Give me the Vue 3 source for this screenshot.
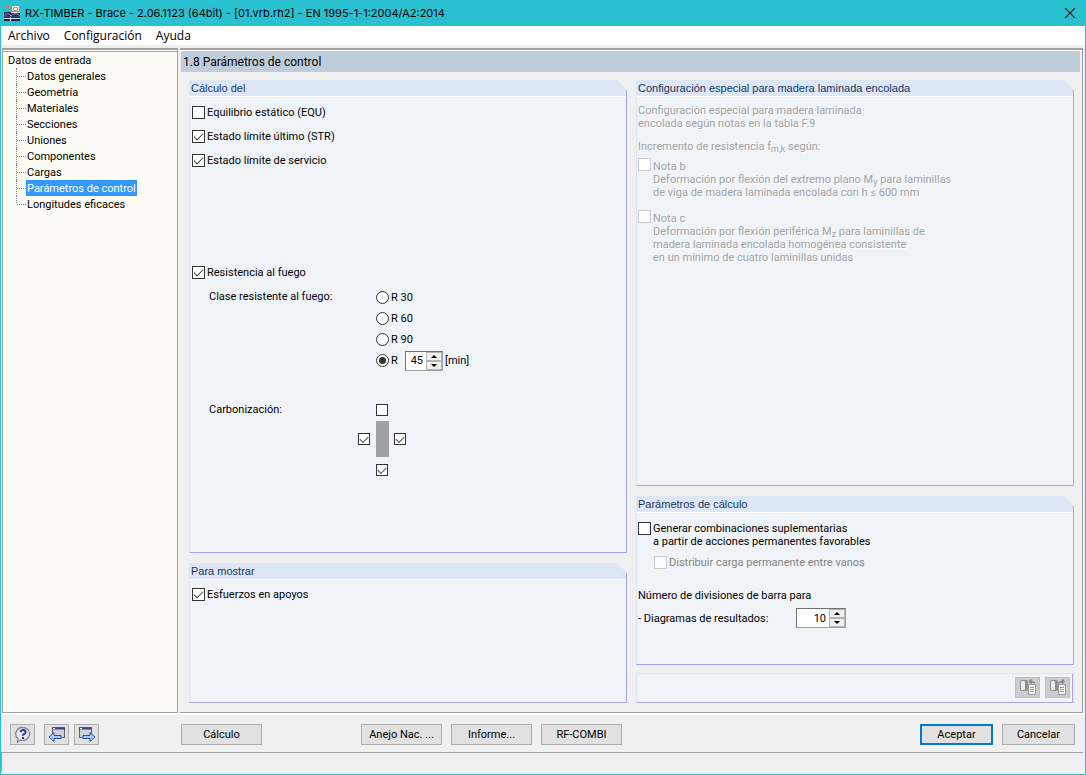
<script setup>
import { ref } from 'vue'

const menus = ['Archivo', 'Configuración', 'Ayuda']
const tree = ['Datos generales', 'Geometría', 'Materiales', 'Secciones', 'Uniones', 'Componentes', 'Cargas', 'Parámetros de control', 'Longitudes eficaces']
const current = ref('Parámetros de control')
const design = ref([
  { label: 'Equilibrio estático (EQU)', on: false },
  { label: 'Estado límite último (STR)', on: true },
  { label: 'Estado límite de servicio', on: true }
])
const fire = ref(true)
const fireClass = ref('R')
const minutes = ref(45)
const charring = ref({ top: false, left: true, right: true, bottom: true })
const charSides = { top: 'Arriba', left: 'Izquierda', right: 'Derecha', bottom: 'Abajo' }
const supports = ref(true)
const combos = ref(false)
const divisions = ref(10)
</script>

<template>
  <div class="window">
    <header class="titlebar">
      <svg class="app-icon" width="16" height="16" viewBox="0 0 16 16">
        <rect y="7" width="16" height="9" fill="#1f2658" />
        <rect x="7" y="0" width="9" height="8" fill="#f6e3d2" />
        <path d="M7.500 .5h8v6h-8z" stroke="#b9846a" fill="none" />
        <path d="M9.500 2.500h4v3h-4z" stroke="#c59478" fill="#fff" />
        <path d="M2 1.500h3M4.500 2v2H2.500M3 6.500h2" stroke="#b5835c" fill="none" />
        <path d="M0 13.500h16M6.500 10v6" stroke="#dfe3f0" fill="none" />
        <path d="M0 10.500l4-2 3 2 4-2 5 2" stroke="#8d97c4" fill="none" />
        <path d="M0 11.500h16" stroke="#3c4780" fill="none" />
      </svg>
      <h1>RX-TIMBER - Brace - 2.06.1123 (64bit) - [01.vrb.rh2] - EN 1995-1-1:2004/A2:2014</h1>
      <button class="close" type="button" aria-label="Cerrar">
        <svg width="10" height="10" viewBox="0 0 10 10"><path d="M0 0L10 10M10 0L0 10" stroke="#111" stroke-width="1.1" /></svg>
      </button>
    </header>

    <nav class="menubar">
      <button v-for="m in menus" :key="m" type="button">{{ m }}</button>
    </nav>

    <div class="workspace">
      <aside class="tree">
        <div class="root">Datos de entrada</div>
        <ul>
          <li v-for="t in tree" :key="t">
            <button type="button" :class="{ selected: t === current }" @click="current = t">{{ t }}</button>
          </li>
        </ul>
      </aside>

      <main class="main">
        <h2>1.8 Parámetros de control</h2>
        <div class="columns">
          <div class="column">
            <section class="group grow">
              <h3>Cálculo del</h3>
              <div class="body">
                <label v-for="d in design" :key="d.label" class="row"><input v-model="d.on" type="checkbox" />{{ d.label }}</label>
                <label class="row fire"><input v-model="fire" type="checkbox" />Resistencia al fuego</label>
                <div class="option">
                  <span class="caption">Clase resistente al fuego:</span>
                  <div class="radios">
                    <label v-for="r in ['R 30', 'R 60', 'R 90']" :key="r"><input v-model="fireClass" type="radio" name="fire" :value="r" />{{ r }}</label>
                    <div class="custom">
                      <label><input v-model="fireClass" type="radio" name="fire" value="R" />R</label>
                      <span class="spin small">
                        <input v-model="minutes" type="text" aria-label="Minutos" />
                        <span class="arrows">
                          <button type="button" aria-label="Más" @click="minutes++"><i class="up" /></button>
                          <button type="button" aria-label="Menos" @click="minutes--"><i class="down" /></button>
                        </span>
                      </span>
                      <span>[min]</span>
                    </div>
                  </div>
                </div>
                <div class="option charring">
                  <span class="caption">Carbonización:</span>
                  <div class="cross">
                    <input v-for="(name, side) in charSides" :key="side" v-model="charring[side]" type="checkbox" :class="side" :aria-label="name" />
                    <span class="beam" />
                  </div>
                </div>
              </div>
            </section>

            <section class="group show">
              <h3>Para mostrar</h3>
              <div class="body">
                <label class="row"><input v-model="supports" type="checkbox" />Esfuerzos en apoyos</label>
              </div>
            </section>
          </div>

          <div class="column">
            <section class="group grow">
              <h3>Configuración especial para madera laminada encolada</h3>
              <div class="body disabled">
                <p>Configuración especial para madera laminada<br />encolada según notas en la tabla F.9</p>
                <p class="strength">Incremento de resistencia f<sub>m,k</sub> según:</p>
                <label class="note"><input type="checkbox" disabled />
                  <span>Nota b<br />Deformación por flexión del extremo plano M<sub>y</sub> para laminillas<br />de viga de madera laminada encolada con h ≤ 600 mm</span>
                </label>
                <label class="note"><input type="checkbox" disabled />
                  <span>Nota c<br />Deformación por flexión periférica M<sub>z</sub> para laminillas de<br />madera laminada encolada homogénea consistente<br />en un mínimo de cuatro laminillas unidas</span>
                </label>
              </div>
            </section>

            <section class="group calc">
              <h3>Parámetros de cálculo</h3>
              <div class="body">
                <label class="note"><input v-model="combos" type="checkbox" />
                  <span>Generar combinaciones suplementarias<br />a partir de acciones permanentes favorables</span>
                </label>
                <label class="row nested"><input type="checkbox" disabled />Distribuir carga permanente entre vanos</label>
                <p class="number">Número de divisiones de barra para</p>
                <div class="row results">
                  <label for="divisions">- Diagramas de resultados:</label>
                  <span class="spin">
                    <input id="divisions" v-model="divisions" type="text" />
                    <span class="arrows">
                      <button type="button" aria-label="Más" @click="divisions++"><i class="up" /></button>
                      <button type="button" aria-label="Menos" @click="divisions--"><i class="down" /></button>
                    </span>
                  </span>
                </div>
              </div>
            </section>

            <div class="group tools">
              <button v-for="k in 2" :key="k" class="btn icon off" type="button" :aria-label="k === 1 ? 'Cargar' : 'Guardar'">
                <svg width="18" height="18" viewBox="0 0 18 18">
                  <rect x="1" y="2" width="8" height="11" rx="2" fill="#8f8f8f" />
                  <rect x="2" y="3" width="4" height="9" rx="1" fill="#ececec" />
                  <rect x="9.500" y="6.500" width="7" height="10" fill="#f2f2ee" stroke="#9a9a9a" />
                  <path d="M11 9.500h4M11 11.500h4M11 13.500h4" stroke="#9a9a9a" />
                  <path v-if="k === 1" d="M15.500 5.500Q15 3.500 10.500 3.500M12.500 1.500l-2 2 2 2" fill="none" stroke="#858585" stroke-width="1.500" />
                  <path v-else d="M9.500 5.500Q10 3.500 15 3.500M13 1.500l2 2-2 2" fill="none" stroke="#858585" stroke-width="1.500" />
                </svg>
              </button>
            </div>
          </div>
        </div>
      </main>
    </div>

    <footer class="actions">
      <button class="btn icon help" type="button" aria-label="Ayuda">
        <svg width="18" height="18" viewBox="0 0 18 18">
          <path d="M9 1.500a6.800 6.500 0 1 1-2.500 12.600L3.500 16l.5-3.200A6.800 6.500 0 0 1 9 1.500z" fill="#e4e7ee" stroke="#858585" stroke-width="1.300" />
          <path d="M6.500 6Q7 4 9.200 4T11.600 6.200Q11.600 7.400 9.800 8.200Q9 8.700 9 9.700" fill="none" stroke="#273f86" stroke-width="2" />
          <rect x="8" y="11" width="2" height="2" fill="#273f86" />
        </svg>
      </button>
      <button class="btn icon" type="button" aria-label="Anterior">
        <svg width="18" height="18" viewBox="0 0 18 18">
          <rect x="4.500" y="1.500" width="12" height="10" fill="#cfd1d6" stroke="#5f6269" />
          <path d="M4 2.500h13" stroke="#34478e" stroke-width="2" /><path d="M5 2.500h2" stroke="#fff" />
          <path d="M1 11l5-4.500v3h7v3H6v3z" fill="#a9ccff" stroke="#2a4da6" />
        </svg>
      </button>
      <button class="btn icon" type="button" aria-label="Siguiente">
        <svg width="18" height="18" viewBox="0 0 18 18">
          <rect x="1.500" y="1.500" width="12" height="10" fill="#cfd1d6" stroke="#5f6269" />
          <path d="M1 2.500h13" stroke="#34478e" stroke-width="2" /><path d="M2 2.500h2" stroke="#fff" />
          <path d="M17 11l-5-4.500v3H5v3h7v3z" fill="#a9ccff" stroke="#2a4da6" />
        </svg>
      </button>
      <button class="btn calculate" type="button">Cálculo</button>
      <button class="btn annex" type="button">Anejo Nac. ...</button>
      <button class="btn" type="button">Informe...</button>
      <button class="btn" type="button">RF-COMBI</button>
      <button class="btn dialog ok" type="button">Aceptar</button>
      <button class="btn dialog" type="button">Cancelar</button>
    </footer>
    <div class="status" />
  </div>
</template>

<style>
body { margin: 0; }
</style>

<style scoped>
* { box-sizing: border-box; }
h1, h2, h3, p, ul { margin: 0; padding: 0; font-weight: normal; }
button { font: inherit; color: inherit; padding: 0; }

.window {
  display: flex;
  flex-direction: column;
  min-height: 100vh;
  background: #f0f0f0;
  border: 1px solid #29c1d0;
  border-top: 0;
  font: 11px/13px Roboto, "Noto Sans", sans-serif;
  color: #000;
}

.titlebar {
  display: flex;
  align-items: center;
  height: 26px;
  padding-left: 3px;
  background: #29c1d0;
}
.app-icon { flex: none; }
.titlebar h1 {
  flex: 1;
  margin-left: 5px;
  font: 11px/16px Inter, "Open Sans", sans-serif;
}
.close { width: 30px; height: 26px; border: 0; background: none; }
.close svg { display: block; margin: auto; }

.menubar {
  display: flex;
  gap: 14px;
  height: 19px;
  padding-left: 7px;
  background: #fff;
  font: 12px/20px "Open Sans", sans-serif;
}
.menubar button { border: 0; background: none; }

.workspace {
  flex: 1;
  display: flex;
  gap: 2px;
  margin-top: 3px;
  padding: 0 2px 0 1px;
  border-bottom: 2px solid #fff;
}
.tree {
  width: 176px;
  padding: 2px 0 0 4px;
  border: 1px solid #a0a0a0;
  border-top: 2px solid #a0a0a0;
  background: #fcfcf5;
  box-shadow: inset 0 1px #fff, inset 0 2px #a0a0a0;
}
.root { padding: 1px 0 0 1px; line-height: 15px; }
.tree ul { list-style: none; margin-left: 9px; }
.tree li {
  display: flex;
  align-items: center;
  height: 16px;
  border-left: 1px dotted #808080;
}
.tree li:last-child { border-left: 0; padding-left: 1px; background: repeating-linear-gradient(#808080 0 1px, transparent 1px 2px) 0 0 / 1px 8px no-repeat; }
.tree li::before { content: ""; width: 9px; border-top: 1px dotted #808080; }
.tree li button { height: 16px; padding: 0 1px; border: 0; background: none; }
.tree li button.selected { background: #3399ff; color: #fff; }

.main {
  flex: 1;
  display: flex;
  flex-direction: column;
  padding: 1px 2px 9px 1px;
  border: solid #a0a0a0;
  border-width: 2px 1px 1px 0;
  box-shadow: inset 0 1px #fff;
}
.main h2 {
  height: 21px;
  padding-left: 2px;
  background: #bfcddb;
  font-size: 12px;
  line-height: 22px;
}
.columns {
  flex: 1;
  display: grid;
  grid-template-columns: 1fr 1fr;
  gap: 9px;
  padding: 8px 6px 0 8px;
}
.column { display: flex; flex-direction: column; gap: 10px; }

.group { position: relative; display: flex; flex-direction: column; }
.grow { flex: 1; }
.group h3 {
  height: 17px;
  padding-left: 2px;
  border-bottom: 1px solid #fff;
  background: #dce6f4;
  clip-path: polygon(0 0, calc(100% - 10px) 0, 100% 10px, 100% 100%, 0 100%);
  font: 11px/17px "Liberation Sans", Arial, sans-serif;
  color: #17375e;
}
.group::after {
  content: "";
  position: absolute;
  inset: 10px 0 0 auto;
  width: 1px;
  background: #a6a6ec;
}
.body {
  flex: 1;
  padding: 4px 2px;
  border-left: 1px solid #dce6f4;
  border-bottom: 1px solid #a6a6ec;
  background: #f0f4f9;
}
.grow .body { padding-top: 3px; }
.show .body { padding-top: 2px; }
.show { height: 140px; }
.calc { height: 169px; }
.column .tools {
  flex-direction: row;
  align-items: center;
  justify-content: flex-end;
  gap: 5px;
  height: 30px;
  margin-top: -2px;
  padding: 0 3px 2px 0;
  border: 1px solid #dce6f4;
  border-bottom-color: #a6a6ec;
  background: #f0f4f9;
}
.tools::after { inset: 0 0 0 auto; }

input[type="checkbox"], input[type="radio"] {
  appearance: none;
  flex: none;
  width: 13px;
  height: 13px;
  margin: 0;
  border: 1px solid #333;
  background: #fff;
  display: inline-grid;
  place-items: center;
}
input[type="checkbox"]:disabled { border-color: #ccc; }
input[type="checkbox"]:checked::before {
  content: "";
  width: 8px;
  height: 4px;
  margin: -2px 0 0;
  border: solid #444;
  border-width: 0 0 1px 1px;
  transform: rotate(-45deg);
}
input[type="radio"] { border-radius: 50%; }
input[type="radio"]:checked::before {
  content: "";
  width: 7px;
  height: 7px;
  border-radius: 50%;
  background: #333;
}

.row { display: flex; align-items: center; gap: 2px; height: 24px; }
.fire { margin-top: 88px; }
.option { display: flex; padding-left: 17px; }
.caption { width: 167px; line-height: 26px; }
.radios { padding-top: 3px; }
.radios label { display: flex; align-items: center; gap: 2px; height: 21px; }
.custom { display: flex; align-items: center; height: 21px; }
.custom label { width: 29px; }
.custom > span:last-child { margin-left: 2px; }
.charring { margin-top: 26px; }
.cross {
  display: grid;
  grid-template-columns: 18px 18px 12px;
  grid-template-rows: 17px 43px 12px;
  margin: 7px 0 0 -18px;
}
.cross input[type="checkbox"] { width: 12px; height: 12px; }
.cross input[type="checkbox"]:checked::before { width: 7px; }
.cross .top, .cross .bottom, .beam { grid-column: 2; }
.cross .top { grid-row: 1; }
.cross .left, .cross .right { grid-row: 2; margin-top: 12px; }
.cross .left { grid-column: 1; }
.cross .right { grid-column: 3; }
.cross .bottom { grid-row: 3; }
.beam { grid-row: 2; width: 13px; height: 36px; background: #a0a0a0; }

.spin {
  display: flex;
  width: 50px;
  height: 20px;
  border: 1px solid #a0a0a0;
  border-top-color: #707070;
  border-left-color: #707070;
  background: #fff;
}
.spin.small { width: 38px; }
.spin input {
  flex: 1;
  min-width: 0;
  padding: 0 3px 0 0;
  border: 0;
  background: #fff;
  font: inherit;
  text-align: right;
}
.arrows { display: flex; flex-direction: column; width: 16px; }
.arrows button {
  flex: 1;
  display: flex;
  align-items: center;
  justify-content: center;
  border: 1px solid #b4b4b4;
  background: #f0f0f0;
}
.arrows i { border: solid transparent; border-width: 0 3px; }
.arrows .up { border-bottom: 3px solid #000; }
.arrows .down { border-top: 3px solid #000; }

.body.disabled { padding: 7px 1px; color: #a0a0a0; text-shadow: 1px 1px #fff; }
.disabled .strength { margin-top: 10px; }
sub { font-size: 9px; line-height: 0; vertical-align: -2px; }
.note { display: flex; gap: 2px; }
.disabled .note { margin-top: 5px; }
.disabled .note + .note { margin-top: 11px; }
.note span { padding-top: 1px; }
.disabled .note span { padding-top: 2px; }
.calc .body { padding: 9px 1px; }
.calc .note { margin-bottom: 2px; }
.calc .note span { padding-top: 0; }
.nested { padding-left: 16px; color: #838383; }
.number { margin-top: 15px; }
.results { margin-top: 4px; }
.results label { width: 156px; }

.btn {
  width: 81px;
  height: 21px;
  border: 1px solid #adadad;
  background: #e1e1e1;
}
.btn.icon { display: flex; align-items: center; justify-content: center; width: 25px; }
.btn.off { border-color: #bfbfbf; background: #ccc; }
.actions {
  display: flex;
  align-items: center;
  gap: 9px;
  height: 37px;
  padding: 2px 10px 0 9px;
}
.help + .icon + .icon { margin-left: -4px; }
.calculate { margin-left: 73px; }
.annex { margin-left: 90px; }
.btn.dialog { width: 73px; }
.btn.ok { margin-left: auto; border: 2px solid #0078d7; }
.status {
  height: 20px;
  margin: 0 2px 2px 0;
  border: 1px solid #a0a0a0;
  border-right: 0;
  border-bottom-color: #fff;
}
</style>
